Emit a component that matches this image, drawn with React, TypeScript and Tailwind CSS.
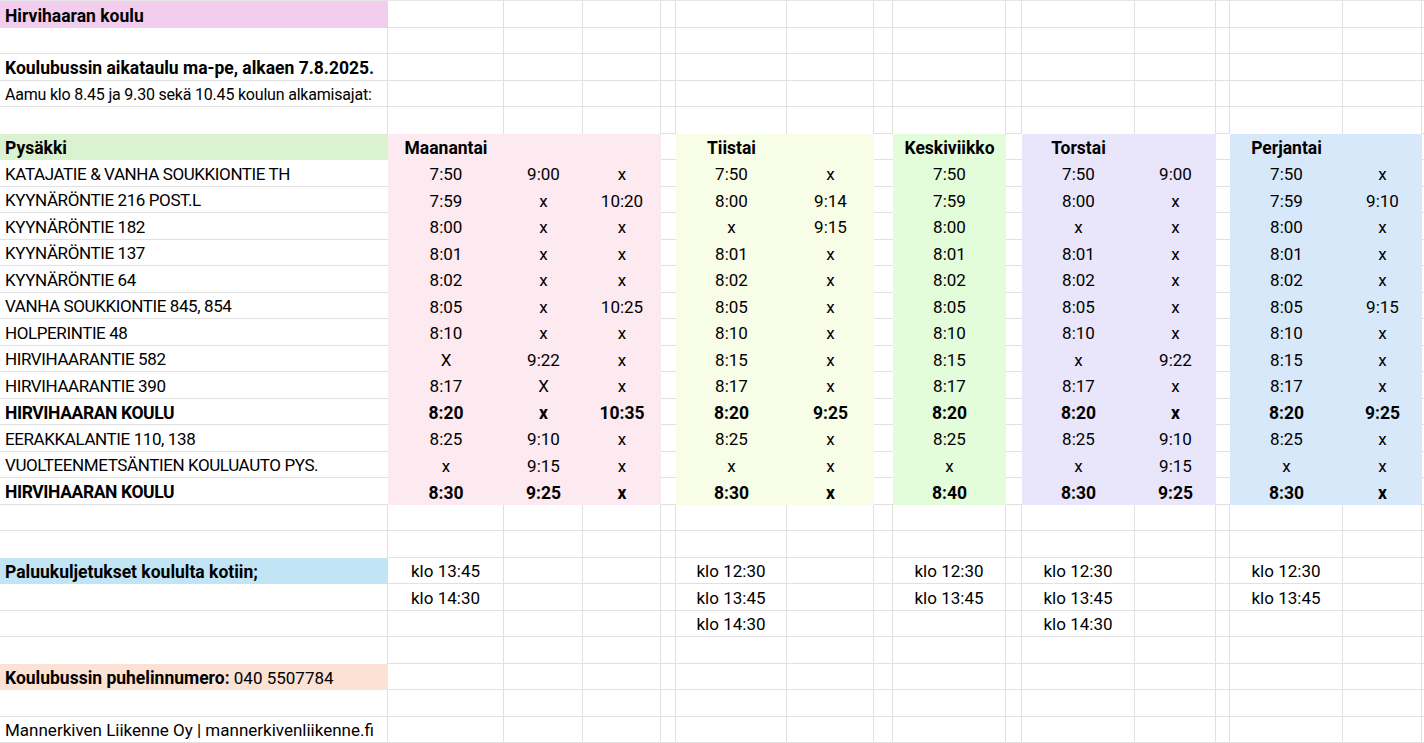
import type { ReactNode } from 'react'

// column widths of the sheet: A..O plus the sliver at the right edge
const COLS = 'grid-cols-[388px_116px_79px_78px_15px_111px_87px_19px_113px_16px_113px_81px_14px_113px_79px_1fr]'
const NCOLS = 16
const NROWS = 28

type Cell = { text?: ReactNode; bold?: boolean; align?: 'left' | 'center'; tight?: string }

const stops: [string, string[], boolean?][] = [
  ['KATAJATIE & VANHA SOUKKIONTIE TH', ['7:50', '9:00', 'x', '7:50', 'x', '7:50', '7:50', '9:00', '7:50', 'x']],
  ['KYYNÄRÖNTIE 216 POST.L', ['7:59', 'x', '10:20', '8:00', '9:14', '7:59', '8:00', 'x', '7:59', '9:10']],
  ['KYYNÄRÖNTIE 182', ['8:00', 'x', 'x', 'x', '9:15', '8:00', 'x', 'x', '8:00', 'x']],
  ['KYYNÄRÖNTIE 137', ['8:01', 'x', 'x', '8:01', 'x', '8:01', '8:01', 'x', '8:01', 'x']],
  ['KYYNÄRÖNTIE 64', ['8:02', 'x', 'x', '8:02', 'x', '8:02', '8:02', 'x', '8:02', 'x']],
  ['VANHA SOUKKIONTIE 845, 854', ['8:05', 'x', '10:25', '8:05', 'x', '8:05', '8:05', 'x', '8:05', '9:15']],
  ['HOLPERINTIE 48', ['8:10', 'x', 'x', '8:10', 'x', '8:10', '8:10', 'x', '8:10', 'x']],
  ['HIRVIHAARANTIE 582', ['X', '9:22', 'x', '8:15', 'x', '8:15', 'x', '9:22', '8:15', 'x']],
  ['HIRVIHAARANTIE 390', ['8:17', 'X', 'x', '8:17', 'x', '8:17', '8:17', 'x', '8:17', 'x']],
  ['HIRVIHAARAN KOULU', ['8:20', 'x', '10:35', '8:20', '9:25', '8:20', '8:20', 'x', '8:20', '9:25'], true],
  ['EERAKKALANTIE 110, 138', ['8:25', '9:10', 'x', '8:25', 'x', '8:25', '8:25', '9:10', '8:25', 'x']],
  ['VUOLTEENMETSÄNTIEN KOULUAUTO PYS.', ['x', '9:15', 'x', 'x', 'x', 'x', 'x', '9:15', 'x', 'x']],
  ['HIRVIHAARAN KOULU', ['8:30', '9:25', 'x', '8:30', 'x', '8:40', '8:30', '9:25', '8:30', 'x'], true],
]

// sheet columns that hold the times, in order mon x3, tue x2, wed, thu x2, fri x2
const timeCols = [1, 2, 3, 5, 6, 8, 10, 11, 13, 14]

const returns: Record<number, string>[] = [
  { 1: 'klo 13:45', 5: 'klo 12:30', 8: 'klo 12:30', 10: 'klo 12:30', 13: 'klo 12:30' },
  { 1: 'klo 14:30', 5: 'klo 13:45', 8: 'klo 13:45', 10: 'klo 13:45', 13: 'klo 13:45' },
  { 5: 'klo 14:30', 10: 'klo 14:30' },
]

function fillOf(r: number, c: number): string | null {
  if (r === 0 && c === 0) return 'bg-[#f2cdee]'
  if (r === 21 && c === 0) return 'bg-[#c1e5f5]'
  if (r === 25 && c === 0) return 'bg-[#fbe2d5]'
  if (r >= 5 && r <= 18) {
    if (r === 5 && c === 0) return 'bg-[#daf2d0]'
    if (c >= 1 && c <= 3) return 'bg-[#fde9f0]'
    if (c === 5 || c === 6) return 'bg-[#f8fde7]'
    if (c === 8) return 'bg-[#e3fcd9]'
    if (c === 10 || c === 11) return 'bg-[#e9e6fb]'
    if (c === 13 || c === 14) return 'bg-[#d8e8fb]'
  }
  return null
}

function buildSheet(): Cell[][] {
  const rows: Cell[][] = Array.from({ length: NROWS }, () => Array.from({ length: NCOLS }, () => ({})))
  rows[0][0] = { text: 'Hirvihaaran koulu', bold: true }
  rows[2][0] = { text: 'Koulubussin aikataulu ma-pe, alkaen 7.8.2025.', bold: true }
  rows[3][0] = { text: 'Aamu klo 8.45 ja 9.30 sekä 10.45 koulun alkamisajat:', tight: 'text-[16px] tracking-[-0.2px]' }
  rows[5][0] = { text: 'Pysäkki', bold: true }
  rows[5][1] = { text: 'Maanantai', bold: true, align: 'center' }
  rows[5][5] = { text: 'Tiistai', bold: true, align: 'center' }
  rows[5][8] = { text: 'Keskiviikko', bold: true, align: 'center' }
  rows[5][10] = { text: 'Torstai', bold: true, align: 'center' }
  rows[5][13] = { text: 'Perjantai', bold: true, align: 'center' }

  stops.forEach(([name, times, bold], i) => {
    const r = 6 + i
    rows[r][0] = { text: name, bold, tight: 'tracking-[-0.4px]' }
    times.forEach((t, j) => {
      rows[r][timeCols[j]] = { text: t, bold, align: 'center' }
    })
  })

  rows[21][0] = { text: 'Paluukuljetukset koululta kotiin;', bold: true }
  returns.forEach((row, i) => {
    Object.entries(row).forEach(([c, t]) => {
      rows[21 + i][Number(c)] = { text: t, align: 'center' }
    })
  })

  rows[25][0] = {
    text: (
      <>
        <span className="text-[17.5px] font-bold">Koulubussin puhelinnumero:</span>
        {' 040 5507784'}
      </>
    ),
  }
  rows[27][0] = { text: 'Mannerkiven Liikenne Oy | mannerkivenliikenne.fi' }
  return rows
}

export default function App() {
  const sheet = buildSheet()

  return (
    <div className="h-[743px] w-[1424px] overflow-hidden bg-white font-['Roboto',sans-serif] text-[17px] text-black">
      <div className={`grid h-full ${COLS} grid-rows-[repeat(28,minmax(0,1fr))] border-t border-t-[#e6e6e6]`}>
        {sheet.map((row, r) =>
          row.map((cell, c) => {
            const fill = fillOf(r, c)
            // gridlines are hidden on and next to filled cells
            const rightLine = !fill && c < NCOLS - 1 && !fillOf(r, c + 1)
            const bottomLine = !fill && !(r < NROWS - 1 && fillOf(r + 1, c))
            return (
              <div
                key={`${r}-${c}`}
                className={[
                  'flex min-w-0 items-center overflow-visible whitespace-pre pt-[3px]',
                  fill ?? '',
                  rightLine ? 'border-r border-r-[#e1e1e1]' : '',
                  bottomLine ? 'border-b border-b-[#e1e1e1]' : '',
                  cell.align === 'center' ? 'justify-center' : 'pl-[5px]',
                  cell.bold ? 'text-[17.5px] font-bold' : '',
                  cell.tight ?? '',
                ].join(' ')}
              >
                {cell.text}
              </div>
            )
          })
        )}
      </div>
    </div>
  )
}
